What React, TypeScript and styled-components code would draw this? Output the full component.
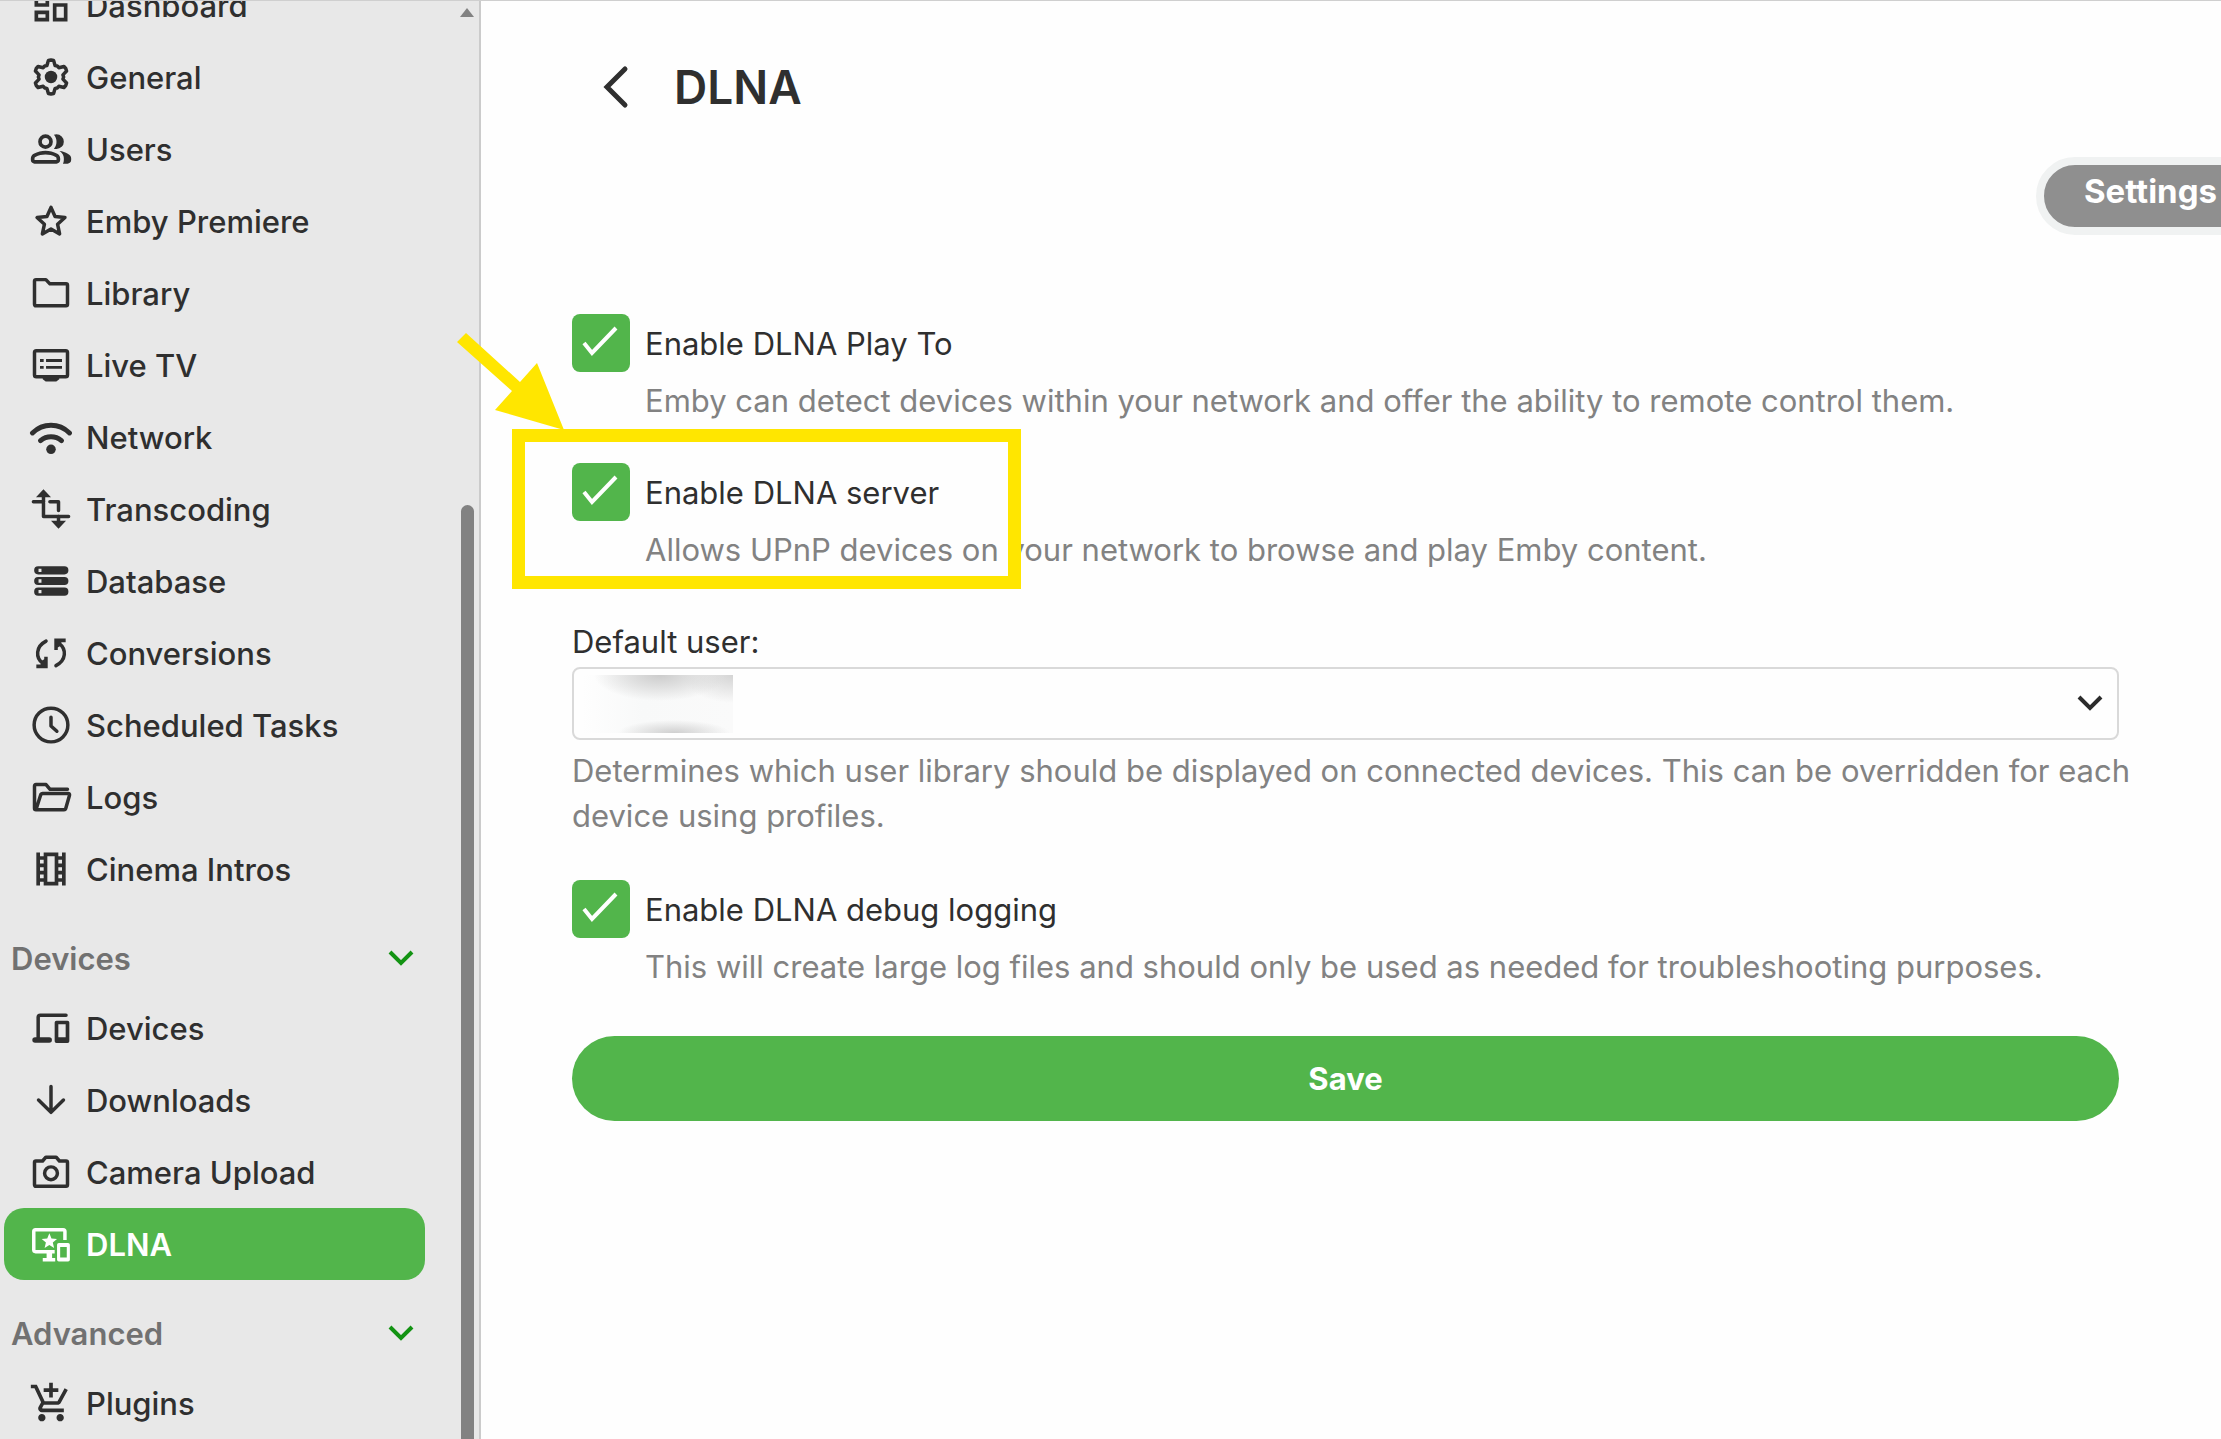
import React from "react";
import styled, { createGlobalStyle, css } from "styled-components";

const GlobalStyle = createGlobalStyle`
  *, *::before, *::after { box-sizing: border-box; }
  body {
    margin: 0;
    background: #fefefe;
    color: #2f2f2f;
    font-family: Inter, "Liberation Sans", sans-serif;
    font-size: 31px;
    line-height: 45px;
  }
`;

const green = "#52b54b";

/* ---------- layout ---------- */

const Page = styled.div`
  display: flex;
  height: 100vh;
  overflow: hidden;
  border-top: 1px solid #cfcfcf;
`;

const Sidebar = styled.aside`
  display: flex;
  flex: 0 0 481px;
  background: #e8e8e8;
  border-right: 2px solid #cbcbcb;
  overflow: hidden;
`;

const Nav = styled.nav`
  flex: 1;
  min-width: 0;
  margin-top: -32px;
  padding: 0 35px 0 4px;
`;

const NavList = styled.ul`
  list-style: none;
  margin: 0;
  padding: 0;
`;

const NavLink = styled.a<{ $active?: boolean }>`
  display: flex;
  align-items: center;
  gap: 13px;
  height: 72px;
  padding-left: 25px;
  border-radius: 20px;
  color: inherit;
  font-weight: 500;
  text-decoration: none;
  white-space: nowrap;
  ${(p) =>
    p.$active &&
    css`
      background: ${green};
      color: #fff;
      font-weight: 600;
    `}
`;

const SectionToggle = styled.button`
  display: flex;
  align-items: center;
  justify-content: space-between;
  width: 100%;
  height: 87px;
  padding: 20px 4px 0 7px;
  border: 0;
  background: none;
  color: #717171;
  font: inherit;
  font-weight: 600;
  text-align: left;
`;

const Scrollbar = styled.div`
  display: flex;
  flex-direction: column;
  align-items: center;
  gap: 488px;
  width: 14px;
  margin-right: 5px;
  padding-top: 7px;
`;

const ScrollUp = styled.span`
  border: 7px solid transparent;
  border-top: 0;
  border-bottom: 9px solid #828282;
`;

const ScrollThumb = styled.span`
  flex: 1;
  width: 13px;
  border-radius: 7px 7px 0 0;
  background: #828282;
`;

const Main = styled.main`
  flex: 1;
  min-width: 0;
`;

const PageHeader = styled.header`
  display: flex;
  align-items: center;
  gap: 25px;
  padding: 50px 0 0 108px;
`;

const BackButton = styled.button`
  display: flex;
  padding: 0;
  border: 0;
  background: none;
  color: inherit;
`;

const Title = styled.h1`
  margin: 0;
  font-size: 46px;
  font-weight: 600;
  line-height: 72px;
`;

const Tabs = styled.div`
  display: flex;
  justify-content: flex-end;
  margin: 34px -44px 0 0;
`;

const Tab = styled.button`
  height: 78px;
  padding: 0 40px 10px;
  border: 8px solid #f0f2f2;
  border-radius: 39px;
  background: #8f8f8f;
  color: #fff;
  font: inherit;
  font-size: 33px;
  font-weight: 700;
`;

/* ---------- form ---------- */

const Form = styled.form`
  display: flex;
  flex-direction: column;
  gap: 42px;
  padding: 79px 102px 0 91px;
`;

const OptionPair = styled.div`
  display: flex;
  flex-direction: column;
  gap: 40px;
`;

const Option = styled.div`
  position: relative;
  display: grid;
  grid-template-columns: 58px 1fr;
  column-gap: 15px;
  row-gap: 6px;
  align-items: center;
`;

const CheckBox = styled.span`
  display: grid;
  width: 58px;
  height: 58px;
  > * {
    grid-area: 1 / 1;
    place-self: center;
  }
  svg {
    pointer-events: none;
  }
`;

const CheckInput = styled.input`
  appearance: none;
  width: 58px;
  height: 58px;
  margin: 0;
  border-radius: 8px;
  background: ${green};
`;

const Hint = styled.p`
  margin: 0 -16px 0 0;
  color: #828282;
`;

const OptionHint = styled(Hint)`
  grid-column: 2;
`;

const Field = styled.div`
  display: flex;
  flex-direction: column;
  padding-top: 5px;
`;

const SelectBox = styled.div`
  display: grid;
  align-items: center;
  margin: 3px 0 8px;
  > * {
    grid-area: 1 / 1;
  }
  svg {
    justify-self: end;
    margin-right: 9px;
    pointer-events: none;
  }
`;

const Select = styled.select`
  appearance: none;
  width: 100%;
  height: 73px;
  padding: 0 60px 0 16px;
  border: 2px solid #d9d9d9;
  border-radius: 8px;
  background: #fefefe;
  color: inherit;
  font: inherit;
`;

const Redacted = styled.span`
  width: 151px;
  height: 58px;
  margin-left: 10px;
  overflow: hidden;
  pointer-events: none;
  background:
    radial-gradient(ellipse 66px 26px at 78px 0, #cccccc 0%, #d4d4d4b0 45%, transparent 100%),
    radial-gradient(ellipse 56px 13px at 92px 100%, #cfcfcf 0%, transparent 100%),
    radial-gradient(ellipse 50px 28px at 100% 0, #d4d4d4 0%, transparent 100%),
    linear-gradient(90deg, #fefefe, #f8f9f9 40%, #fafafa);
`;

const SaveButton = styled.button`
  height: 85px;
  margin-top: 5px;
  border: 0;
  border-radius: 43px;
  background: ${green};
  color: #fff;
  font: inherit;
  font-weight: 700;
`;

/* ---------- annotation over the second option ---------- */

const Highlight = styled.span`
  position: absolute;
  top: -34px;
  left: -60px;
  width: 509px;
  height: 160px;
  border: 13px solid #ffe600;
  pointer-events: none;
`;

const Arrow = styled.svg`
  position: absolute;
  top: -134px;
  left: -120px;
  pointer-events: none;
`;

/* ---------- icons ---------- */

const Glyph = styled.svg`
  flex: none;
  fill: currentColor;
  stroke: none;
  .line {
    fill: none;
    stroke: currentColor;
    stroke-width: 1.9;
    stroke-linecap: round;
    stroke-linejoin: round;
  }
`;

const polar = (cx: number, cy: number, r: number, deg: number) => {
  const a = ((deg - 90) * Math.PI) / 180;
  return `${(cx + r * Math.cos(a)).toFixed(2)} ${(cy + r * Math.sin(a)).toFixed(2)}`;
};

const gearPath =
  "M" +
  [0, 60, 120, 180, 240, 300]
    .flatMap((a) => [
      polar(12, 12, 6.6, a - 20),
      polar(12, 12, 9.1, a - 9),
      polar(12, 12, 9.3, a),
      polar(12, 12, 9.1, a + 9),
      polar(12, 12, 6.6, a + 20),
      polar(12, 12, 6.9, a + 30),
    ])
    .join("L") +
  "Z";

const starPath = (cx: number, cy: number, r: number, inner: number) =>
  "M" + Array.from({ length: 10 }, (_, i) => polar(cx, cy, i % 2 ? r * inner : r, i * 36)).join("L") + "Z";

const icons: Record<string, React.ReactNode> = {
  dashboard: (
    <path d="M19 5v2h-4V5h4M9 5v6H5V5h4m10 8v6h-4v-6h4M9 17v2H5v-2h4M21 3h-8v6h8V3zM11 3H3v10h8V3zm10 8h-8v10h8V11zm-10 4H3v6h8v-6z" />
  ),
  settings: (
    <>
      <path className="line" d={gearPath} />
      <circle cx="12" cy="12" r="3.4" />
    </>
  ),
  users: (
    <g transform="translate(0 24) scale(.025)">
      <path d="M40-272q0-34 17.500-62.500T104-378q62-31 126-46.500T360-440q66 0 130 15.500T616-378q29 15 46.500 43.500T680-272v32q0 33-23.500 56.500T600-160H120q-33 0-56.500-23.500T40-240v-32Zm800 112H738q11-18 16.500-38.500T760-240v-40q0-44-24.500-84.500T666-434q51 6 96 20.500t84 35.500q36 20 55 44.500t19 53.500v40q0 33-23.500 56.500T840-160ZM360-480q-66 0-113-47t-47-113q0-66 47-113t113-47q66 0 113 47t47 113q0 66-47 113t-113 47Zm400-160q0 66-47 113t-113 47q-11 0-28-2.500t-28-5.500q27-32 41.500-71t14.500-81q0-42-14.500-81T544-792q14-5 28-6.500t28-1.500q66 0 113 47t47 113ZM120-240h480v-32q0-11-5.500-20T580-306q-54-27-109-40.500T360-360q-56 0-111 13.500T140-306q-9 5-14.500 14t-5.500 20v32Zm240-320q33 0 56.500-23.500T440-640q0-33-23.500-56.500T360-720q-33 0-56.500 23.500T280-640q0 33 23.500 56.500T360-560Z" />
    </g>
  ),
  star: <path className="line" d={starPath(12, 12.6, 8, 0.47)} />,
  folder: <path className="line" d="M3 5.500q0-.8.8-.8H9.200l2.200 2.300H20.200q.8 0 .8.8V18.200q0 .8-.8.8H3.800q-.8 0-.8-.8Z" />,
  tv: (
    <>
      <rect className="line" x="3" y="4.200" width="18" height="14.200" rx="1" />
      <path d="M7.500 18.500h9v1.300l-1.600 1.200H9.100l-1.600-1.200ZM6 8.700h2v1.600H6ZM9.300 8.700H18v1.600H9.300ZM6 12.500h2v1.600H6ZM9.300 12.500H18v1.600H9.300Z" />
    </>
  ),
  wifi: (
    <>
      <path className="line" style={{ strokeWidth: 2.7 }} d="M1.900 9.800Q6.200 5.600 12 5.600T22.100 9.800M6.300 14Q8.800 11.900 12 11.900T17.700 14" />
      <circle cx="12" cy="18.700" r="2.600" />
    </>
  ),
  transform: (
    <>
      <path className="line" d="M2.400 8H8M7.900 4V16.100H21.600M11.400 8H16.100V12.800M16.100 16V20" />
      <path d="M7.900 1.200 12 5.600H3.800ZM16.100 22.800 12 18.400H20.200Z" />
    </>
  ),
  storage: (
    <path
      fillRule="evenodd"
      d="M5 4H19.300a2.200 2.200 0 0 1 0 4.400H5A2.200 2.200 0 0 1 5 4ZM5 9.800H19.300a2.200 2.200 0 0 1 0 4.400H5a2.200 2.200 0 0 1 0-4.400ZM5 15.600H19.300a2.200 2.200 0 0 1 0 4.400H5a2.200 2.200 0 0 1 0-4.400ZM5.200 5.300V7.100H6.800V5.300ZM5.200 11.100v1.800H6.800V11.100ZM5.200 16.900v1.800H6.800V16.900Z"
    />
  ),
  convert: (
    <>
      <path className="line" d="M9.300 5.500C3.600 8.400 3.400 14.500 7.600 17.700M14.700 18.900C20.400 16 20.600 9.900 16.400 6.700" />
      <path d="M4 20.300V18.300H6.300L6.800 16.300 8.300 15.400V14H10.200V20.300ZM20 4.100V6.100H17.700L17.200 8.100 15.700 9V10.400H13.800V4.100Z" />
    </>
  ),
  clock: (
    <>
      <circle className="line" cx="12" cy="12" r="9.200" />
      <path className="line" d="M12 7.800V12.500L15.200 15.400" />
    </>
  ),
  logs: (
    <path
      className="line"
      d="M21 7.800H11.500L9.300 5.200H3.800q-.8 0-.8.800V18.200q0 .8.800.8L6.300 11q.3-.9 1.200-.9H21.300q1 0 .8.900L20 18.400q-.2.600-.9.600H3.800"
    />
  ),
  film: (
    <path d="M18 3v2h-2V3H8v2H6V3H4v18h2v-2h2v2h8v-2h2v2h2V3h-2zM8 17H6v-2h2v2zm0-4H6v-2h2v2zm0-4H6V7h2v2zm6 10h-4V5h4v14zm4-2h-2v-2h2v2zm0-4h-2v-2h2v2zm0-4h-2V7h2v2z" />
  ),
  devices: (
    <>
      <path className="line" d="M20.200 5H6.200Q5 5 5 6.200V17.500" />
      <path d="M3.300 17H11a1.500 1.500 0 0 1 0 3H3.300a1.500 1.500 0 0 1 0-3Z" />
      <path fillRule="evenodd" d="M15 8H21q1 0 1 1V19.200q0 1-1 1H15q-1 0-1-1V9q0-1 1-1ZM16 10v7h4V10Z" />
    </>
  ),
  download: <path className="line" d="M12 4.600V18.600M5.200 12 12 18.700 18.800 12" />,
  camera: (
    <>
      <path className="line" d="M3.800 6H7.400L9.200 3.900H14.800L16.600 6H20.200q.8 0 .8.800V19q0 .8-.8.800H3.800Q3 19.800 3 19V6.800Q3 6 3.800 6Z" />
      <circle className="line" cx="12" cy="12.700" r="3.500" />
    </>
  ),
  dlna: (
    <>
      <path
        className="line"
        style={{ strokeLinecap: "butt" }}
        d="M19.600 9.800V5.200Q19.600 4.200 18.600 4.200H3.600Q2.600 4.200 2.600 5.200V15.200Q2.600 16.200 3.600 16.200H14"
      />
      <path d="M9.600 16H12.600V19.600H14.300V21.500H7.500V19.600H9.600Z" />
      <path fillRule="evenodd" d="M16.300 11.400H21.300q1 0 1 1V20.600q0 1-1 1H16.300q-1 0-1-1V12.400q0-1 1-1ZM17 13.600v5.800h3.600V13.600Z" />
      <path d={starPath(11.1, 10.6, 4.4, 0.45)} />
    </>
  ),
  plugins: (
    <path d="M11 9h2V6h3V4h-3V1h-2v3H8v2h3v3zm-4 9c-1.100 0-1.990.9-1.990 2S5.900 22 7 22s2-.9 2-2-.9-2-2-2zm10 0c-1.100 0-1.990.9-1.990 2s.89 2 1.990 2 2-.9 2-2-.9-2-2-2zm-9.830-3.250l.03-.12.9-1.630h7.450c.75 0 1.410-.41 1.750-1.030l3.860-7.010L19.420 4h-.01l-1.100 2-2.760 5H8.530l-.13-.27L6.160 6l-.95-2-.94-2H1v2h2l3.600 7.590-1.350 2.450c-.16.28-.25.61-.25.96 0 1.100.9 2 2 2h12v-2H7.420c-.13 0-.25-.11-.25-.25z" />
  ),
};

const Icon = ({ name }: { name: string }) => (
  <Glyph width="44" height="44" viewBox="0 0 24 24" aria-hidden="true">
    {icons[name]}
  </Glyph>
);

const Chevron = ({ color }: { color: string }) => (
  <svg width="40" height="24" viewBox="0 0 40 24" fill="none" stroke={color} strokeWidth="4" aria-hidden="true">
    <path d="M9 5 20 16 31 5" />
  </svg>
);

/* ---------- content ---------- */

type Item = { icon: string; label: string; active?: boolean };

const serverItems: Item[] = [
  { icon: "dashboard", label: "Dashboard" },
  { icon: "settings", label: "General" },
  { icon: "users", label: "Users" },
  { icon: "star", label: "Emby Premiere" },
  { icon: "folder", label: "Library" },
  { icon: "tv", label: "Live TV" },
  { icon: "wifi", label: "Network" },
  { icon: "transform", label: "Transcoding" },
  { icon: "storage", label: "Database" },
  { icon: "convert", label: "Conversions" },
  { icon: "clock", label: "Scheduled Tasks" },
  { icon: "logs", label: "Logs" },
  { icon: "film", label: "Cinema Intros" },
];

const deviceItems: Item[] = [
  { icon: "devices", label: "Devices" },
  { icon: "download", label: "Downloads" },
  { icon: "camera", label: "Camera Upload" },
  { icon: "dlna", label: "DLNA", active: true },
];

const advancedItems: Item[] = [{ icon: "plugins", label: "Plugins" }];

const Items = ({ items }: { items: Item[] }) => (
  <NavList>
    {items.map((item) => (
      <li key={item.label}>
        <NavLink href="#" $active={item.active} aria-current={item.active ? "page" : undefined}>
          <Icon name={item.icon} />
          {item.label}
        </NavLink>
      </li>
    ))}
  </NavList>
);

const Section = ({ title, items }: { title: string; items: Item[] }) => (
  <>
    <SectionToggle type="button" aria-expanded="true">
      {title}
      <Chevron color="#139313" />
    </SectionToggle>
    <Items items={items} />
  </>
);

type CheckOptionProps = { id: string; label: string; hint: string; children?: React.ReactNode };

const CheckOption = ({ id, label, hint, children }: CheckOptionProps) => (
  <Option>
    <CheckBox>
      <CheckInput type="checkbox" id={id} defaultChecked />
      <svg width="38" height="36" viewBox="0 0 38 36" fill="none" stroke="#fff" strokeWidth="4" aria-hidden="true">
        <path d="M2 18 10 28 34 3" />
      </svg>
    </CheckBox>
    <label htmlFor={id}>{label}</label>
    <OptionHint>{hint}</OptionHint>
    {children}
  </Option>
);

export default function App() {
  return (
    <>
      <GlobalStyle />
      <Page>
        <Sidebar>
          <Nav>
            <Items items={serverItems} />
            <Section title="Devices" items={deviceItems} />
            <Section title="Advanced" items={advancedItems} />
          </Nav>
          <Scrollbar aria-hidden="true">
            <ScrollUp />
            <ScrollThumb />
          </Scrollbar>
        </Sidebar>
        <Main>
          <PageHeader>
            <BackButton type="button" aria-label="Back">
              <svg width="60" height="60" viewBox="0 0 60 60" fill="none" stroke="currentColor" strokeWidth="5" strokeLinecap="round">
                <path d="M36 12 18 30 36 48" />
              </svg>
            </BackButton>
            <Title>DLNA</Title>
          </PageHeader>
          <Tabs>
            <Tab type="button">Settings</Tab>
          </Tabs>
          <Form>
            <OptionPair>
              <CheckOption
                id="play-to"
                label="Enable DLNA Play To"
                hint="Emby can detect devices within your network and offer the ability to remote control them."
              />
              <CheckOption
                id="server"
                label="Enable DLNA server"
                hint="Allows UPnP devices on your network to browse and play Emby content."
              >
                <Highlight />
                <Arrow width="120" height="108" viewBox="0 0 120 108" fill="#ffe600" aria-hidden="true">
                  <path d="M5 13 14 4 68 53 85 34 112 101 43 81 60 62Z" />
                </Arrow>
              </CheckOption>
            </OptionPair>
            <Field>
              <label htmlFor="default-user">Default user:</label>
              <SelectBox>
                <Select id="default-user" defaultValue="">
                  <option value="" />
                </Select>
                <Redacted />
                <Chevron color="#2b2b2b" />
              </SelectBox>
              <Hint>
                Determines which user library should be displayed on connected devices. This can be overridden for each
                device using profiles.
              </Hint>
            </Field>
            <CheckOption
              id="debug-logging"
              label="Enable DLNA debug logging"
              hint="This will create large log files and should only be used as needed for troubleshooting purposes."
            />
            <SaveButton type="submit">Save</SaveButton>
          </Form>
        </Main>
      </Page>
    </>
  );
}
